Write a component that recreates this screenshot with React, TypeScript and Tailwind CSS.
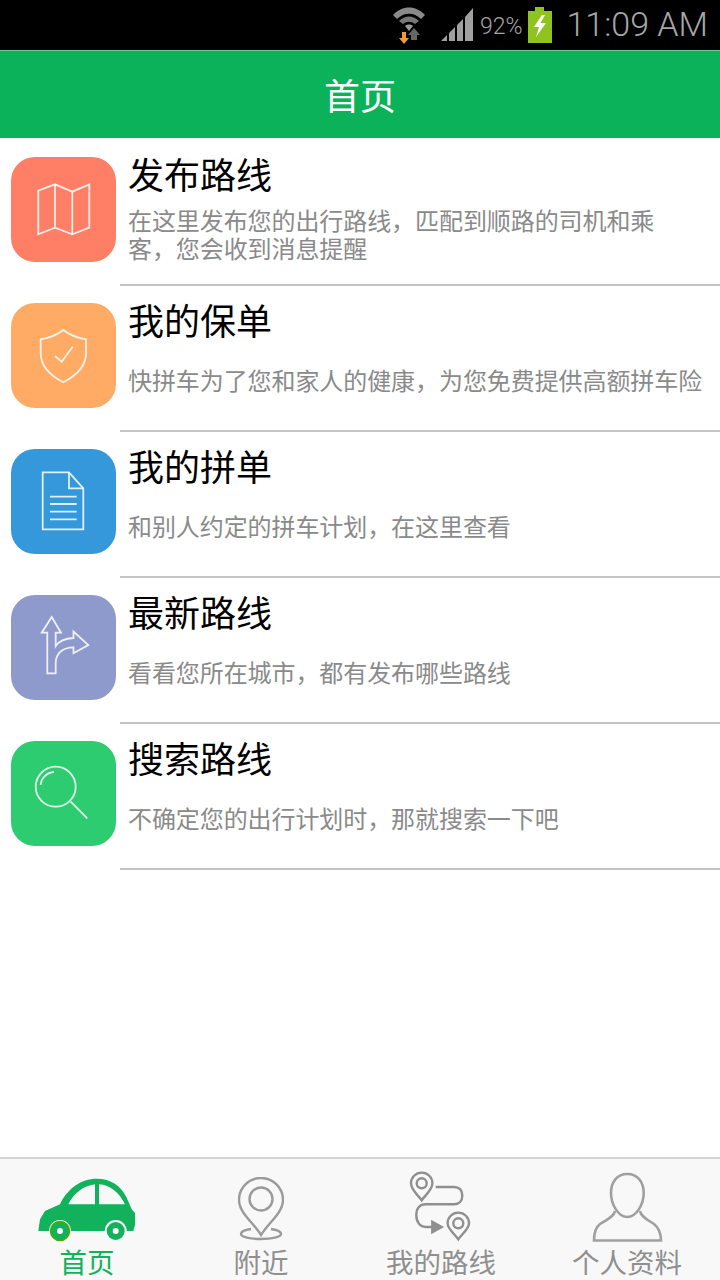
const rows = [
  {
    title: '发布路线',
    desc: '在这里发布您的出行路线，匹配到顺路的司机和乘\n客，您会收到消息提醒',
    color: 'bg-[#ff7e66]',
    icon: (
      <>
        <path d="M27.3 33.7 44 27.3 61.3 34.7 78.3 27.3V70.7L61.3 77.3 44 70.7 27.3 77.3Z" />
        <path d="M44 27.3V70.7M61.3 34.7V77.3" />
      </>
    ),
  },
  {
    title: '我的保单',
    desc: '快拼车为了您和家人的健康，为您免费提供高额拼车险',
    color: 'bg-[#ffab66]',
    icon: (
      <>
        <path d="M52.3 27C46 32 38 35 29.7 36.3V50C29.7 63 40 73 52.3 79.3 64.6 73 75 63 75 50V36.3C66.6 35 58.6 32 52.3 27Z" />
        <path d="M44 53 50.7 58.7 61.7 43.7" />
      </>
    ),
  },
  {
    title: '我的拼单',
    desc: '和别人约定的拼车计划，在这里查看',
    color: 'bg-[#3498db]',
    icon: (
      <>
        <path d="M31.7 23.3H58L72.3 39.3V80.3H31.7Z" />
        <path d="M58 23.3V39.3H72.3M39 47.7H65.7M39 55H65.7M39 62.7H65.7M39 70.3H65.7" />
      </>
    ),
  },
  {
    title: '最新路线',
    desc: '看看您所在城市，都有发布哪些路线',
    color: 'bg-[#8e99cc]',
    icon: (
      <path d="M40.7 22 50 37.7H44.7V51C48 46 54 43.5 62.5 43V36.5L77.3 50 62.5 58.3V52.3C52 52.5 44.7 58 44.7 68V78.3H36.3V37.7H30.7Z" />
    ),
  },
  {
    title: '搜索路线',
    desc: '不确定您的出行计划时，那就搜索一下吧',
    color: 'bg-[#2ecc71]',
    icon: (
      <>
        <circle cx="44.7" cy="45.7" r="20" />
        <path d="M59.7 60.7 76.3 77.3M29.7 44C30 37 36 31.5 43 31" />
      </>
    ),
  },
];

function StatusBar() {
  return (
    <div className="flex h-[51px] items-center justify-end border-b border-[#6fc795] bg-black pr-[12px] text-[#a6a6a6]">
      <svg width="36" height="40" viewBox="0 0 36 40" className="mb-[3px] mr-[13px]">
        <path d="M2 11C11 1 25 1 34 11L30 15C23 8 13 8 6 15Z" fill="#8a8a8a" />
        <path d="M8 17C14 11 22 11 28 17L24 20C20 17 16 17 12 20Z" fill="#777" />
        <path d="M14 22C16 20 20 20 22 22L18 27Z" fill="#999" />
        <path d="M11 28V34H8L13 40 18 34H15V28Z" fill="#f39a2c" />
        <path d="M23 24 17 31H20V36H26V31H29Z" fill="#666" />
      </svg>
      <svg width="34" height="35" viewBox="0 0 34 35" className="mb-[2px] mr-[6px]">
        <path d="M1 34 7 28V34ZM9 26 15 20V34H9ZM17 18 23 12V34H17ZM25 10 33 1V34H25Z" fill="#a0a0a0" />
      </svg>
      <span className="mr-[6px] pt-[3px] font-['Roboto',sans-serif] text-[23px] font-light leading-none">92%</span>
      <svg width="24" height="36" viewBox="0 0 24 36" className="mb-[1px] mr-[14px]">
        <path d="M0 4H7V0H16V4H24V36H0Z" fill="#8fc31f" />
        <path d="M14 8 6 20H11L8 30 18 16H12.5L17 8Z" fill="#fff" />
      </svg>
      <span className="pb-[2px] font-['Roboto',sans-serif] text-[34px] font-light leading-none">11:09 AM</span>
    </div>
  );
}

function Row({ item }: { item: (typeof rows)[number] }) {
  return (
    <div className="flex h-[146px]">
      <div className="w-[120px] pl-[11px] pt-[17px]">
        <div className={`h-[105px] w-[105px] rounded-[24px] ${item.color}`}>
          <svg
            width="105"
            height="105"
            viewBox="0 0 105 105"
            fill="none"
            stroke="#fff"
            strokeOpacity="0.85"
            strokeWidth="1.8"
          >
            {item.icon}
          </svg>
        </div>
      </div>
      <div className="flex-1 border-b-2 border-[#c4c4c4] pl-2">
        <div className="mt-[10px] text-[36px] leading-[46px] text-black">{item.title}</div>
        <div className="flex h-[76px] items-center whitespace-pre-line text-[24px] leading-[28px] tracking-[-0.08px] text-[#8a8a8a]">
          {item.desc}
        </div>
      </div>
    </div>
  );
}

function CarIcon() {
  return (
    <svg width="100" height="66" viewBox="0 0 100 66">
      <path
        d="M1.3 54 3 42.3 8 34 23 27.3C30 12 44 1.7 59.7 1.7 74 1.7 84 9 89.7 20.7L94.7 32.3 98 36V48L96.3 54Z"
        fill="#12b25c"
      />
      <path d="M31.3 27.3C37 16 46 9 58 7.3V27.3ZM62 7.3C73 8 82 15 88 27.3H62Z" fill="#f8f8f8" />
      <circle cx="23" cy="54" r="11" fill="#f8f8f8" />
      <circle cx="78.7" cy="54" r="11" fill="#f8f8f8" />
      <circle cx="23" cy="54" r="9.5" fill="#12b25c" stroke="#4ea800" strokeWidth="1.5" />
      <circle cx="78.7" cy="54" r="9" fill="#12b25c" />
      <circle cx="23" cy="54" r="3" fill="#fff" />
      <circle cx="78.7" cy="54" r="3" fill="#fff" />
    </svg>
  );
}

function PinIcon() {
  return (
    <svg width="46" height="66" viewBox="0 0 46 66" fill="none" stroke="#9a9a9a" strokeWidth="2.4">
      <path d="M23 58C16 46 1 36 1 23A22 22 0 0 1 45 23C45 36 30 46 23 58Z" />
      <circle cx="23" cy="22" r="11.5" />
      <path d="M13 52C6 53 3 55 3 57 3 60 12 62 23 62S43 60 43 57C43 55 40 53 33 52" />
    </svg>
  );
}

function RouteIcon() {
  return (
    <svg width="64" height="72" viewBox="0 0 64 72" fill="none" stroke="#8f8f8f" strokeWidth="2.4">
      <path d="M12.7 29.3C9 24 2 19 2 12.3A10.7 10.7 0 0 1 23.4 12.3C23.4 19 16.4 24 12.7 29.3Z" />
      <circle cx="12.7" cy="12.3" r="5" />
      <path d="M26.7 16H45.3C50 16 53.3 19 53.3 24.5S50 33.3 45.3 33.3H16.7C11 33.3 7.3 37 7.3 44S11 56 16.7 56H24" />
      <path d="M23.3 50.7 32.7 56 23.3 61.3Z" fill="#8f8f8f" />
      <path d="M49.3 68.3C45.6 63 38.6 58 38.6 52.3A10.7 10.7 0 0 1 60 52.3C60 58 53 63 49.3 68.3Z" />
      <circle cx="49.3" cy="52.3" r="5" />
    </svg>
  );
}

function UserIcon() {
  return (
    <svg width="72" height="72" viewBox="0 0 72 72" fill="none" stroke="#a0a0a0" strokeWidth="2.6">
      <path d="M36.3 2C26 2 20 10 20 21 20 32 27 45 36.3 45 45.6 45 52.7 32 52.7 21 52.7 10 46.6 2 36.3 2Z" />
      <path d="M24 39C23 45 15 48 9 52 4 56 3 61 3 68.5H70C70 61 68 56 63 52 57 48 50 45 49 39" />
    </svg>
  );
}

const tabs = [
  { label: '首页', icon: <CarIcon />, active: true, top: 'h-[85px] pt-[18px]' },
  { label: '附近', icon: <PinIcon />, active: false, top: 'h-[85px] pt-[18px]' },
  { label: '我的路线', icon: <RouteIcon />, active: false, top: 'h-[85px] pt-[12px]' },
  { label: '个人资料', icon: <UserIcon />, active: false, top: 'h-[85px] pt-[13px]' },
];

export default function App() {
  return (
    <div className="flex h-[1280px] w-[720px] flex-col overflow-hidden bg-white font-['Noto_Sans_CJK_SC',sans-serif]">
      <StatusBar />
      <div className="flex h-[87px] items-center justify-center bg-[#0cb25a] pb-[2px] text-[36px] text-white">首页</div>
      <div className="flex-1 pt-[2px]">
        {rows.map((item) => (
          <Row key={item.title} item={item} />
        ))}
      </div>
      <div className="grid h-[123px] grid-cols-[174px_174px_186px_186px] border-t-2 border-[#d4d4d4] bg-[#f8f8f8]">
        {tabs.map((tab) => (
          <div key={tab.label} className="flex flex-col items-center">
            <div className={`flex items-start justify-center ${tab.top}`}>{tab.icon}</div>
            <div className={`text-[27.5px] leading-[34px] ${tab.active ? 'text-[#12b25c]' : 'text-[#8f8f8f]'}`}>
              {tab.label}
            </div>
          </div>
        ))}
      </div>
    </div>
  );
}
